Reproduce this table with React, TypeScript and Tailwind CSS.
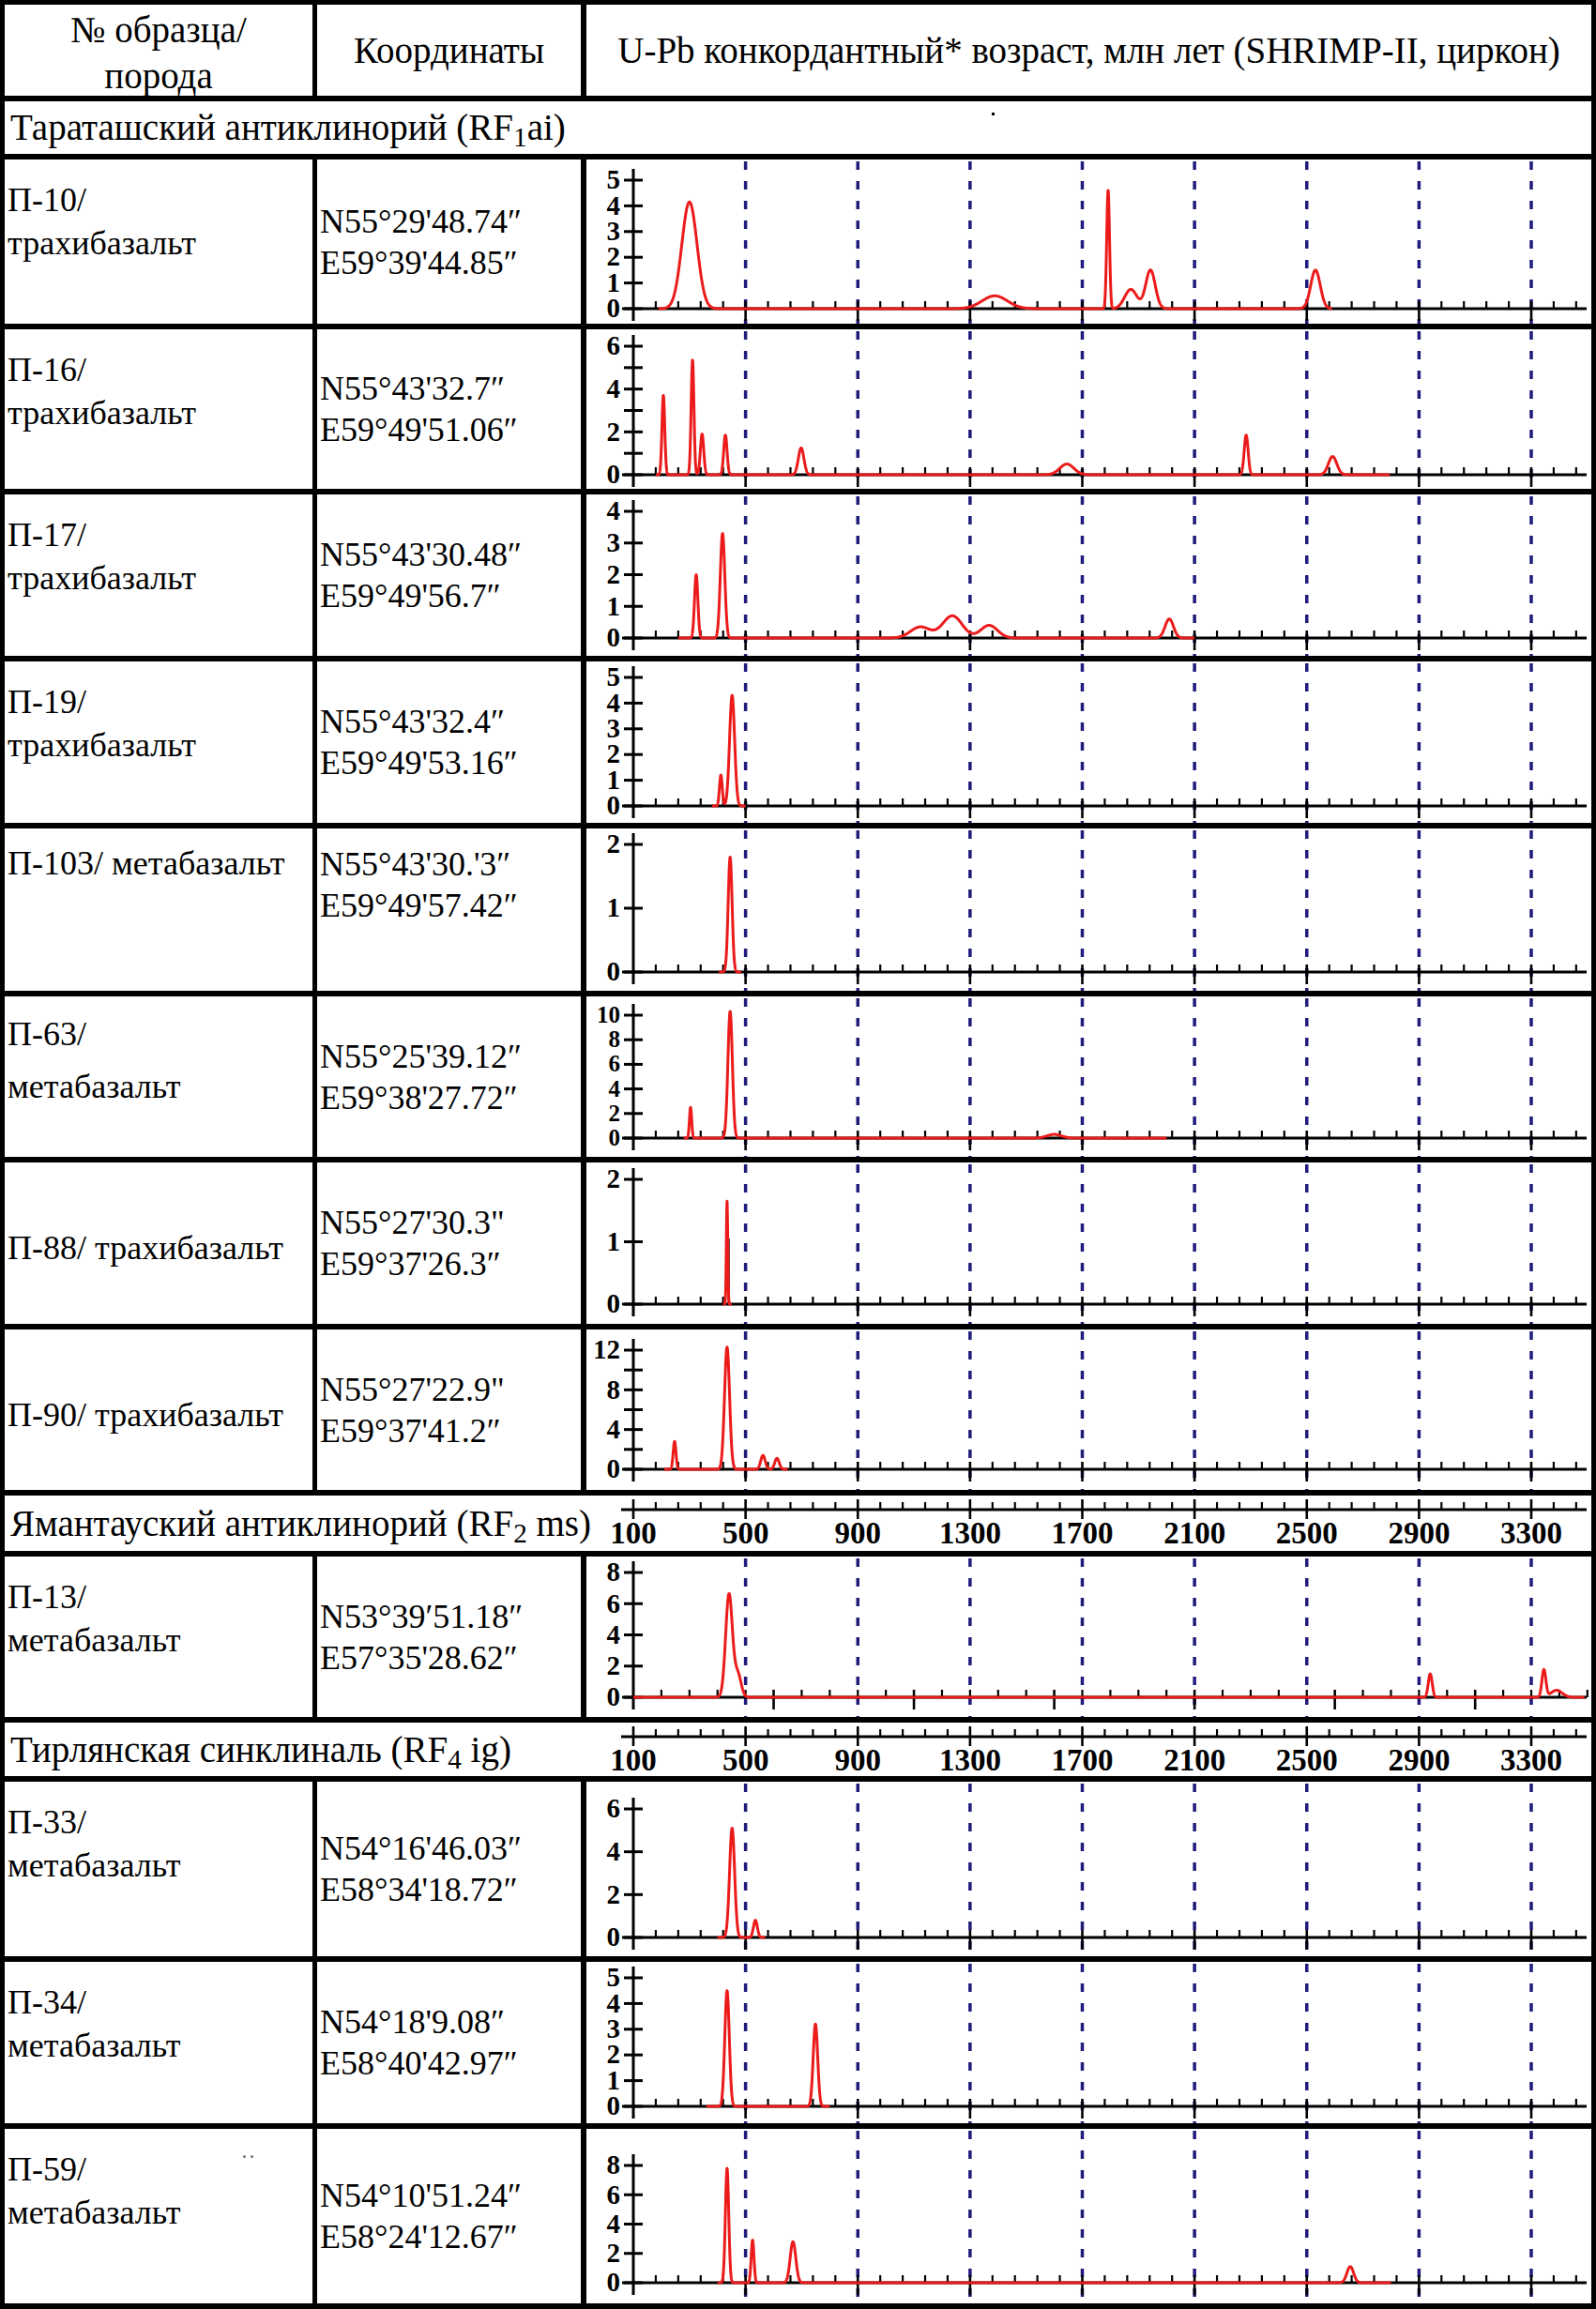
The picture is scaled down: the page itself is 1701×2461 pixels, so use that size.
import React from "react";

const K = 957 / 3200;
const xa = (age: number) => 50 + (age - 100) * K;
const W = 1071;
const RED = "#ec1b1b";
const NAVY = "#1f1c7c";

type Peak = [number, number, number];

interface ChartCfg {
  h: number;
  top: number;
  base: number;
  max: number;
  tick: number;
  label: number;
  peaks: Peak[];
  range: [number, number];
  alt?: boolean;
  black?: [number, number];
  fs?: number;
}

function curvePath(c: ChartCfg) {
  const unit = (c.base - c.top) / c.max;
  let d = "";
  for (let a = c.range[0]; a <= c.range[1]; a += 0.5) {
    let v = 0;
    for (const [m, hg, s] of c.peaks) v += hg * Math.exp(-((a - m) * (a - m)) / (2 * s * s));
    const x = xa(a);
    const y = c.base - v * unit;
    d += (d ? "L" : "M") + x.toFixed(2) + " " + y.toFixed(2);
  }
  return d;
}

function Chart({ c }: { c: ChartCfg }) {
  const unit = (c.base - c.top) / c.max;
  const dashes = [500, 900, 1300, 1700, 2100, 2500, 2900, 3300];
  const minor: number[] = [];
  const major: number[] = [];
  if (c.alt) {
    for (let a = 200; a <= 3500; a += 100) {
      if ((a - 100) % 500 === 0) major.push(a);
      else minor.push(a);
    }
  } else {
    for (let a = 180; a <= 3500; a += 80) if ((a - 100) % 400 !== 0) minor.push(a);
    for (let a = 500; a <= 3300; a += 400) major.push(a);
  }
  const yt: number[] = [];
  for (let v = 0; v <= c.max + 0.001; v += c.tick) yt.push(v);
  const yl: number[] = [];
  for (let v = 0; v <= c.max + 0.001; v += c.label) yl.push(v);
  const fs = c.fs ?? 29;
  return (
    <svg width={W} height={c.h} className="block">
      {dashes.map((a) => (
        <line key={"d" + a} x1={xa(a)} x2={xa(a)} y1={2} y2={c.h} stroke={NAVY} strokeWidth={3.5} strokeDasharray="9 12" />
      ))}
      <line x1={38} x2={1066} y1={c.base} y2={c.base} stroke="#000" strokeWidth={3} />
      {minor.map((a) => (
        <line key={"m" + a} x1={xa(a)} x2={xa(a)} y1={c.base - 8} y2={c.base} stroke="#000" strokeWidth={2.2} />
      ))}
      {major.map((a) => (
        <line key={"M" + a} x1={xa(a)} x2={xa(a)} y1={c.base - 8} y2={c.base + 13} stroke="#000" strokeWidth={2.6} />
      ))}
      <line x1={50} x2={50} y1={c.top - 12} y2={c.base + 13} stroke="#000" strokeWidth={3} />
      {yt.map((v) => (
        <line key={"t" + v} x1={40} x2={60} y1={c.base - v * unit} y2={c.base - v * unit} stroke="#000" strokeWidth={3} />
      ))}
      {yl.map((v) => (
        <text
          key={"l" + v}
          x={36}
          y={c.base - v * unit}
          dy="0.32em"
          textAnchor="end"
          fontSize={fs}
          fontWeight={700}
          fontFamily="'Liberation Serif', serif"
        >
          {v}
        </text>
      ))}
      {c.black && (
        <line x1={xa(c.black[0])} x2={xa(c.black[0])} y1={c.base} y2={c.base - c.black[1] * unit} stroke="#000" strokeWidth={2} />
      )}
      <path d={curvePath(c)} fill="none" stroke={RED} strokeWidth={3} strokeLinejoin="round" />
    </svg>
  );
}

function AxisSvg({ h }: { h: number }) {
  const y = 15;
  const minor: number[] = [];
  for (let a = 180; a <= 3500; a += 80) if ((a - 100) % 400 !== 0) minor.push(a);
  const major: number[] = [];
  for (let a = 100; a <= 3300; a += 400) major.push(a);
  return (
    <svg width={W} height={h} className="block">
      <line x1={37} x2={1066} y1={y} y2={y} stroke="#000" strokeWidth={3} />
      {minor.map((a) => (
        <line key={"m" + a} x1={xa(a)} x2={xa(a)} y1={y - 8} y2={y} stroke="#000" strokeWidth={2.2} />
      ))}
      {major.map((a) => (
        <line key={"M" + a} x1={xa(a)} x2={xa(a)} y1={y - 11} y2={y + 10} stroke="#000" strokeWidth={2.6} />
      ))}
      {major.map((a) => (
        <text
          key={"t" + a}
          x={xa(a)}
          y={y + 36}
          textAnchor="middle"
          fontSize={33}
          fontWeight={700}
          fontFamily="'Liberation Serif', serif"
        >
          {a}
        </text>
      ))}
    </svg>
  );
}

interface RowData {
  rowClass: string;
  name: string[];
  nameClass: string;
  coords: [string, string];
  coordClass: string;
  chart: ChartCfg;
  extra?: React.ReactNode;
}

const rows1: RowData[] = [
  {
    rowClass: "h-[181px]",
    name: ["П-10/", "трахибазальт"],
    nameClass: "pt-[20px]",
    coords: ["N55°29'48.74″", "E59°39'44.85″"],
    coordClass: "justify-center",
    chart: {
      h: 175, top: 22, base: 159, max: 5, tick: 1, label: 1, range: [190, 2590],
      peaks: [[300, 4.15, 27], [1388, 0.5, 45], [1792, 4.6, 5], [1873, 0.75, 22], [1943, 1.5, 17], [2531, 1.5, 17]],
    },
  },
  {
    rowClass: "h-[176px]",
    name: ["П-16/", "трахибазальт"],
    nameClass: "pt-[20px]",
    coords: ["N55°43'32.7″", "E59°49'51.06″"],
    coordClass: "justify-center",
    chart: {
      h: 170, top: 18, base: 155, max: 6, tick: 1, label: 2, range: [180, 2796],
      peaks: [[207, 3.7, 5], [311, 5.35, 5], [345, 1.9, 6], [428, 1.85, 6], [698, 1.25, 10], [1645, 0.5, 25], [2284, 1.85, 7], [2592, 0.85, 15]],
    },
  },
  {
    rowClass: "h-[178px]",
    name: ["П-17/", "трахибазальт"],
    nameClass: "pt-[20px]",
    coords: ["N55°43'30.48″", "E59°49'56.7″"],
    coordClass: "justify-center",
    chart: {
      h: 172, top: 18, base: 153, max: 4, tick: 1, label: 1, range: [260, 2100],
      peaks: [[324, 2.0, 6], [418, 3.3, 8], [1123, 0.35, 35], [1237, 0.7, 35], [1368, 0.4, 30], [2010, 0.6, 15]],
    },
  },
  {
    rowClass: "h-[178px]",
    name: ["П-19/", "трахибазальт"],
    nameClass: "pt-[20px]",
    coords: ["N55°43'32.4″", "E59°49'53.16″"],
    coordClass: "justify-center",
    chart: {
      h: 172, top: 17, base: 154, max: 5, tick: 1, label: 1, range: [380, 500],
      peaks: [[412, 1.2, 5], [452, 4.3, 9]],
    },
  },
  {
    rowClass: "h-[179px]",
    name: ["П-103/ метабазальт"],
    nameClass: "pt-[14px]",
    coords: ["N55°43'30.'3″", "E59°49'57.42″"],
    coordClass: "justify-start pt-[16px]",
    chart: {
      h: 173, top: 17, base: 153, max: 2, tick: 1, label: 1, range: [405, 485],
      peaks: [[445, 1.8, 7]],
    },
  },
  {
    rowClass: "h-[177px]",
    name: ["П-63/", "метабазальт"],
    nameClass: "pt-[17px] flex flex-col gap-[10px]",
    coords: ["N55°25'39.12″", "E59°38'27.72″"],
    coordClass: "justify-center",
    chart: {
      h: 171, top: 20, base: 151, max: 10, tick: 2, label: 2, range: [280, 2000], fs: 25,
      peaks: [[304, 2.5, 4], [445, 10.3, 8], [1600, 0.3, 25]],
    },
  },
  {
    rowClass: "h-[178px]",
    name: ["П-88/ трахибазальт"],
    nameClass: "flex flex-col justify-center pt-[10px]",
    coords: ["N55°27'30.3\"", "E59°37'26.3″"],
    coordClass: "justify-center",
    chart: {
      h: 172, top: 18, base: 151, max: 2, tick: 1, label: 1, range: [420, 450],
      peaks: [[434, 1.65, 2.5]], black: [440, 1.05],
    },
  },
  {
    rowClass: "h-[177px]",
    name: ["П-90/ трахибазальт"],
    nameClass: "flex flex-col justify-center pt-[10px]",
    coords: ["N55°27'22.9\"", "E59°37'41.2″"],
    coordClass: "justify-center",
    chart: {
      h: 171, top: 22, base: 149, max: 12, tick: 2, label: 4, range: [210, 650],
      peaks: [[247, 2.8, 5], [434, 12.3, 9], [562, 1.4, 8], [612, 1.1, 8]],
    },
  },
];

const rowP13: RowData = {
  rowClass: "h-[177px]",
  name: ["П-13/", "метабазальт"],
  nameClass: "pt-[20px]",
  coords: ["N53°39′51.18″", "E57°35'28.62″"],
  coordClass: "justify-center",
  chart: {
    h: 171, top: 17, base: 150, max: 8, tick: 2, label: 2, range: [100, 3490], alt: true,
    peaks: [[441, 6.6, 12], [472, 1.5, 12], [2940, 1.5, 7], [3345, 1.75, 7], [3390, 0.45, 20]],
  },
};

const rows3: RowData[] = [
  {
    rowClass: "h-[192px]",
    name: ["П-33/", "метабазальт"],
    nameClass: "pt-[20px]",
    coords: ["N54°16'46.03″", "E58°34'18.72″"],
    coordClass: "justify-center",
    chart: {
      h: 186, top: 29, base: 166, max: 6, tick: 2, label: 2, range: [400, 570],
      peaks: [[452, 5.1, 9], [535, 0.8, 7]],
    },
  },
  {
    rowClass: "h-[178px]",
    name: ["П-34/", "метабазальт"],
    nameClass: "pt-[20px]",
    coords: ["N54°18'9.08″", "E58°40'42.97″"],
    coordClass: "justify-center",
    chart: {
      h: 172, top: 17, base: 154, max: 5, tick: 1, label: 1, range: [360, 800],
      peaks: [[434, 4.5, 8], [749, 3.2, 8]],
    },
  },
  {
    rowClass: "h-[192px]",
    name: ["П-59/", "метабазальт"],
    nameClass: "pt-[20px]",
    coords: ["N54°10'51.24″", "E58°24'12.67″"],
    coordClass: "justify-center",
    chart: {
      h: 186, top: 39, base: 164, max: 8, tick: 2, label: 2, range: [400, 2800],
      peaks: [[434, 7.8, 6], [525, 2.9, 5], [669, 2.8, 10], [2655, 1.1, 12]],
    },
    extra: (
      <>
        <span className="absolute left-[254px] top-[28px] w-[3px] h-[3px] rounded-full bg-gray-500" />
        <span className="absolute left-[262px] top-[28px] w-[3px] h-[3px] rounded-full bg-gray-500" />
      </>
    ),
  },
];

function SampleRow({ r }: { r: RowData }) {
  return (
    <div className={`flex border-b-[6px] border-black ${r.rowClass}`}>
      <div className={`relative w-[333px] shrink-0 border-r-[5px] border-black pl-[3px] text-[36px] leading-[46px] ${r.nameClass}`}>
        {r.name.map((n) => (
          <div key={n}>{n}</div>
        ))}
        {r.extra}
      </div>
      <div className={`w-[287px] shrink-0 border-r-[6px] border-black pl-[3px] flex flex-col text-[36px] leading-[44px] ${r.coordClass}`}>
        <div>{r.coords[0]}</div>
        <div>{r.coords[1]}</div>
      </div>
      <div className="w-[1071px] shrink-0 overflow-hidden">
        <Chart c={r.chart} />
      </div>
    </div>
  );
}

function AxisRow({ title, rowClass, h }: { title: React.ReactNode; rowClass: string; h: number }) {
  return (
    <div className={`flex border-b-[6px] border-black ${rowClass}`}>
      <div className="w-[620px] shrink-0 pl-[6px] flex items-center text-[39px] leading-[44px] whitespace-nowrap">{title}</div>
      <div className="w-[1071px] shrink-0">
        <AxisSvg h={h} />
      </div>
    </div>
  );
}

export default function App() {
  return (
    <div className="w-[1701px] h-[2461px] bg-white text-black font-['Liberation_Serif','Times_New_Roman',serif]">
      <div className="border-x-[5px] border-t-[5px] border-black">
        <div className="flex h-[103px] border-b-[6px] border-black text-[39px] leading-[49px]">
          <div className="w-[333px] shrink-0 border-r-[5px] border-black flex flex-col items-center justify-center text-center pt-[4px]">
            <div>№ образца/</div>
            <div>порода</div>
          </div>
          <div className="w-[287px] shrink-0 border-r-[6px] border-black flex items-center justify-center">Координаты</div>
          <div className="w-[1071px] shrink-0 flex items-center justify-center whitespace-nowrap">
            U-Pb конкордантный* возраст, млн лет (SHRIMP-II, циркон)
          </div>
        </div>
        <div className="relative flex items-center h-[62px] border-b-[6px] border-black pl-[6px] text-[39px] leading-[44px]">
          <span>
            Тараташский антиклинорий (RF<sub>1</sub>ai)
          </span>
          <span className="absolute left-[1052px] top-[12px] w-[3px] h-[3px] bg-black" />
        </div>
        {rows1.map((r) => (
          <SampleRow key={r.name[0]} r={r} />
        ))}
        <AxisRow
          rowClass="h-[65px]"
          h={59}
          title={
            <span>
              Ямантауский антиклинорий (RF<sub>2</sub> ms)
            </span>
          }
        />
        <SampleRow r={rowP13} />
        <AxisRow
          rowClass="h-[63px]"
          h={57}
          title={
            <span>
              Тирлянская синклиналь (RF<sub>4</sub> ig)
            </span>
          }
        />
        {rows3.map((r) => (
          <SampleRow key={r.name[0]} r={r} />
        ))}
      </div>
    </div>
  );
}
